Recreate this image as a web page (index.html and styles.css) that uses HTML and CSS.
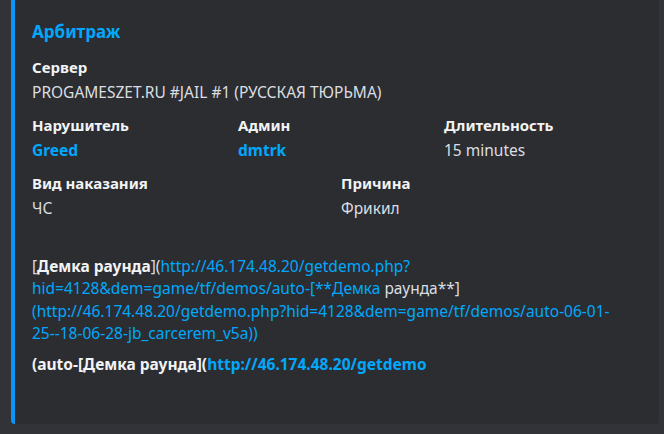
FILE: index.html
```html
<!DOCTYPE html>
<html lang="ru">
<head>
    <meta charset="UTF-8">
    <title>Арбитраж</title>
    <link rel="stylesheet" href="styles.css">
</head>
<body>
    <div class="embed">
        <div class="title">Арбитраж</div>
        <div class="fields">
            <div class="field full">
                <div class="name">Сервер</div>
                <div class="value">PROGAMESZET.RU #JAIL #1 (РУССКАЯ ТЮРЬМА)</div>
            </div>
            <div class="field third">
                <div class="name">Нарушитель</div>
                <div class="value"><a class="mention">Greed</a></div>
            </div>
            <div class="field third">
                <div class="name">Админ</div>
                <div class="value"><a class="mention">dmtrk</a></div>
            </div>
            <div class="field third">
                <div class="name">Длительность</div>
                <div class="value">15 minutes</div>
            </div>
            <div class="field half">
                <div class="name">Вид наказания</div>
                <div class="value">ЧС</div>
            </div>
            <div class="field half">
                <div class="name">Причина</div>
                <div class="value">Фрикил</div>
            </div>
            <div class="field full">
                <div class="name blank"></div>
                <div class="value">[<b>Демка раунда</b>](<a>http://46.174.48.20/getdemo.php?</a><br><a>hid=4128&amp;dem=game/tf/demos/auto-[**Демка</a> раунда**]<br><a>(http://46.174.48.20/getdemo.php?hid=4128&amp;dem=game/tf/demos/auto-06-01-</a><br><a>25--18-06-28-jb_carcerem_v5a))</a></div>
            </div>
            <div class="field full last">
                <div class="name">(auto-[Демка раунда](<a>http://46.174.48.20/getdemo</a></div>
                <div class="value empty"></div>
            </div>
        </div>
    </div>
</body>
</html>
```

FILE: styles.css
```css
body {
    margin: 0;
    background: #313338;
    font-family: 'Noto Sans', 'Open Sans', sans-serif;
    font-size: 15.5px;
    color: #dbdee1;
    height: 434px;
    overflow: hidden;
}
.embed {
    margin-left: 11px;
    width: 610px;
    background: #2b2d31;
    border-left: 4px solid #0b95f7;
    border-radius: 0 0 4px 4px;
    padding: 21px 17px 25px 17px;
}
.title {
    font-size: 17px;
    font-weight: 700;
    line-height: 22px;
    color: #00a8fc;
}
.fields {
    display: grid;
    grid-template-columns: repeat(6, 1fr);
    column-gap: 8px;
    row-gap: 11px;
    margin-top: 13px;
}
.field.full { grid-column: span 6; }
.field.third { grid-column: span 2; }
.field.half { grid-column: span 3; }
.field.last { margin-top: -3px; }
.name {
    font-size: 15px;
    font-weight: 700;
    color: #f2f3f5;
    line-height: 22.5px;
    margin-bottom: 2px;
    white-space: nowrap;
}
.name.blank {
    height: 22.5px;
}
.field.last .name {
    font-size: 15.5px;
}
.value {
    line-height: 22.5px;
    white-space: nowrap;
}
.value.empty {
    height: 22px;
}
a {
    color: #00a8fc;
}
.mention {
    font-weight: 700;
}
b {
    font-weight: 700;
    color: #f2f3f5;
}
```
